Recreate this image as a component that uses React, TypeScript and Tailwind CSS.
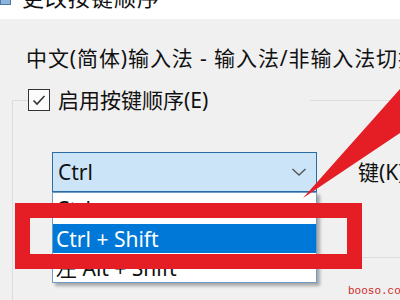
import React from "react";

const App = () => {
  return (
    <div className="relative w-[400px] h-[300px] overflow-hidden bg-[#f0f0f0] text-[#111] font-['Noto_Sans','Noto_Sans_CJK_SC',sans-serif]">
      {/* title bar, cut off at the top */}
      <div className="h-[19px] bg-white overflow-hidden">
        <div className="flex items-start -mt-[15px]">
          <div className="w-[11px] h-[20px] bg-[#8fb3d9] border border-[#4a78a8]" />
          <span className="ml-[11px] text-[22px] leading-[22px] tracking-[1px] font-['Noto_Sans_CJK_SC',sans-serif]">更改按键顺序</span>
        </div>
      </div>

      <div className="pl-[26px] pt-[27px] text-[21px] leading-[24px] tracking-[0.9px] whitespace-nowrap">
        中文(简体)输入法 - 输入法/非输入法切换
      </div>

      <fieldset className="ml-[12px] mt-[18px] w-[420px] h-[260px] border border-[#dcdcdc]">
        <legend className="ml-[15px] w-[282px] h-[24px] flex items-center">
          <span className="w-[22px] h-[22px] border-[1.5px] border-[#333] bg-[#fbfbfb] flex items-center justify-center">
            <svg width="16" height="16" viewBox="0 0 16 16">
              <path d="M2.5 8.5 L6 12 L13.5 4" fill="none" stroke="#333" strokeWidth="1.6" />
            </svg>
          </span>
          <span className="ml-[8px] text-[21px] leading-[24px] whitespace-nowrap">启用按键顺序(E)</span>
        </legend>

        <div className="mt-[40px] ml-[39px] flex items-center">
          <div className="relative">
            <div className="w-[265px] h-[40px] bg-[#cce4f7] border border-[#2c6ca5] flex items-center justify-between pl-[5px] pr-[9px]">
              <span className="text-[21px] leading-[24px]">Ctrl</span>
              <svg width="16" height="10" viewBox="0 0 16 10">
                <path d="M1.5 2 L8 8 L14.5 2" fill="none" stroke="#555" strokeWidth="1.4" />
              </svg>
            </div>

            {/* open dropdown list */}
            <div className="absolute left-0 top-full w-[265px] h-[91px] bg-white border border-[#6f9bc6] shadow-[3px_3px_3px_rgba(0,0,0,0.3)] flex flex-col pt-[2px] text-[21px] leading-[24px]">
              <div className="h-[29px] flex items-center pl-[3px]">Ctrl</div>
              <div className="h-[30px] flex items-center pl-[3px] bg-[#0078d7] text-white">Ctrl + Shift</div>
              <div className="h-[29px] flex items-center pl-[3px]">左 Alt + Shift</div>
            </div>
          </div>
          <span className="ml-[41px] text-[21px] leading-[24px] whitespace-nowrap">键(K)</span>
        </div>

        <div className="mt-[65px] ml-[308px] w-[100px] border-t border-[#dcdcdc]" />
      </fieldset>

      {/* red annotations */}
      <div className="absolute left-[15px] top-[203px] w-[347px] h-[66px] border-[15px] border-[#e51d25]" />
      <svg className="absolute left-0 top-0" width="400" height="300" viewBox="0 0 400 300">
        <polygon points="303,198 400,89 400,133" fill="#e51d25" />
      </svg>

      <span className="absolute left-[348px] top-[285px] text-[11px] leading-[13px] text-[#d02a2a] font-['Liberation_Mono',monospace] whitespace-nowrap">booso.com</span>
    </div>
  );
};

export default App;
